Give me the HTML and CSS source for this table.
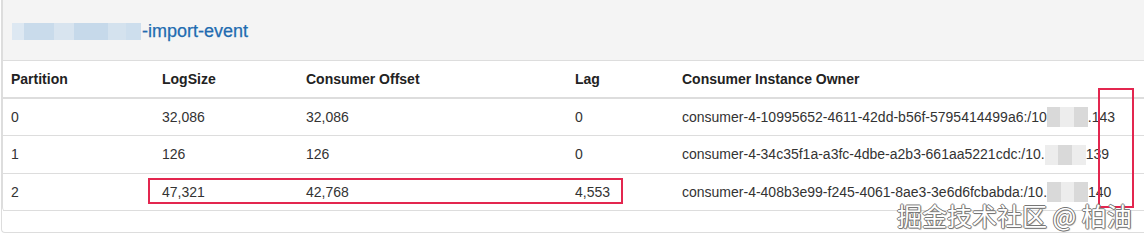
FILE: index.html
```html
<!DOCTYPE html>
<html>
<head>
<meta charset="utf-8">
<link rel="stylesheet" href="styles.css">
</head>
<body>
<div class="panel">
  <div class="inner">
    <div class="heading">
      <span class="blur-title"><i class="b1"></i><i class="b2"></i><i class="b3"></i><i class="b4"></i><i class="b5"></i><i class="b6"></i></span><span class="title">-import-event</span>
    </div>
    <table class="grid">
      <colgroup>
        <col class="c1"><col class="c2"><col class="c3"><col class="c4"><col>
      </colgroup>
      <thead>
        <tr><th>Partition</th><th>LogSize</th><th>Consumer Offset</th><th>Lag</th><th>Consumer Instance Owner</th></tr>
      </thead>
      <tbody>
        <tr><td>0</td><td>32,086</td><td>32,086</td><td>0</td><td>consumer-4-10995652-4611-42dd-b56f-5795414499a6:/10<span class="blur-ip"><i></i><i class="lt"></i><i></i></span>.143</td></tr>
        <tr><td>1</td><td>126</td><td>126</td><td>0</td><td>consumer-4-34c35f1a-a3fc-4dbe-a2b3-661aa5221cdc:/10.<span class="blur-ip"><i class="lt"></i><i></i><i class="lt"></i></span>139</td></tr>
        <tr><td>2</td><td>47,321</td><td>42,768</td><td>4,553</td><td>consumer-4-408b3e99-f245-4061-8ae3-3e6d6fcbabda:/10.<span class="blur-ip"><i></i><i class="lt"></i><i></i></span>140</td></tr>
      </tbody>
    </table>
  </div>
  <div class="foot"></div>
</div>
<div class="mark mark-a"></div>
<div class="mark mark-b"></div>
<div class="watermark">掘金技术社区 @ 柏油</div>
</body>
</html>
```

FILE: styles.css
```css
html, body {
  margin: 0;
  padding: 0;
  background: #fff;
  overflow: hidden;
}
body {
  width: 1144px;
  height: 241px;
  position: relative;
  font-family: "Liberation Sans", Arial, sans-serif;
  font-size: 14px;
  color: #333;
}
.panel {
  margin-left: 1px;
  width: 1170px;
  border-left: 1px solid #ddd;
  border-bottom: 1px solid #ddd;
  border-bottom-left-radius: 4px;
}
.inner {
  border-left: 1px solid #ddd;
  border-bottom-left-radius: 4px;
}
.heading {
  background: #f4f4f4;
  border-bottom: 1px solid #ddd;
  display: flex;
  align-items: center;
  padding-left: 9px;
  padding-top: 2px;
  box-sizing: border-box;
  height: 61px;
}
.blur-title {
  display: inline-flex;
  height: 17px;
  width: 129px;
  margin-right: 1px;
}
.blur-title i {
  display: block;
  height: 100%;
}
.blur-title .b1 { width: 12px; background: #dde8f2; }
.blur-title .b2 { width: 30px; background: #c9dbeb; }
.blur-title .b3 { width: 20px; background: #d8e4ef; }
.blur-title .b4 { width: 34px; background: #c6d9ea; }
.blur-title .b5 { width: 18px; background: #d4e2ee; }
.blur-title .b6 { width: 15px; background: #cddeed; }
.title {
  color: #226bb0;
  font-size: 18px;
  -webkit-text-stroke: 0.25px #226bb0;
}
.grid {
  border-collapse: collapse;
  table-layout: fixed;
  width: 100%;
}
.c1 { width: 151px; }
.c2 { width: 144px; }
.c3 { width: 269px; }
.c4 { width: 107px; }
.grid th, .grid td {
  padding: 8px;
  line-height: 20px;
  text-align: left;
  white-space: nowrap;
  border-bottom: 1px solid #ddd;
}
.grid th {
  font-weight: bold;
  border-bottom: 2px solid #ddd;
  color: #222;
}
.blur-ip {
  display: inline-flex;
  vertical-align: middle;
  height: 20px;
  width: 41px;
  margin-top: -2px;
}
.blur-ip i {
  display: block;
  flex: 1;
  background: #d9d9d9;
}
.blur-ip i.lt {
  background: #ededed;
}
.foot {
  height: 21px;
}
.mark {
  position: absolute;
  border: 2px solid #e3264f;
  box-sizing: border-box;
}
.mark-a {
  left: 148px;
  top: 178px;
  width: 475px;
  height: 26px;
}
.mark-b {
  left: 1098px;
  top: 88px;
  width: 36px;
  height: 120px;
}
.watermark {
  position: absolute;
  left: 897px;
  top: 199px;
  font-family: "Noto Sans CJK SC", sans-serif;
  font-size: 25px;
  line-height: 32px;
  color: #fff;
  white-space: nowrap;
  text-shadow: 1px 0 0 #777, -1px 0 0 #777, 0 1px 0 #777, 0 -1px 0 #777, 1px 1px 1px #999;
}
```
